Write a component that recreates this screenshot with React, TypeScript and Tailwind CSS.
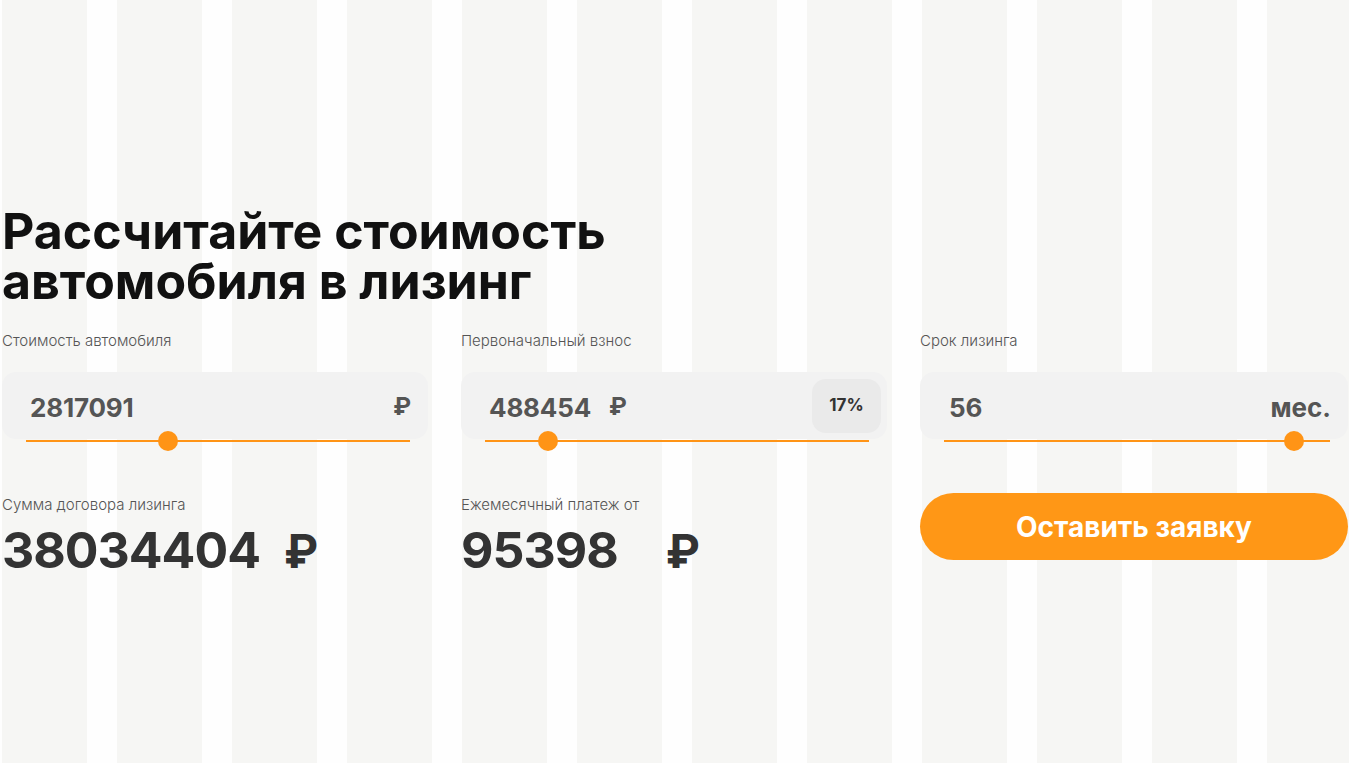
const stripes = Array.from({ length: 12 });

type SliderProps = { pos: number };

// thin orange track sitting on the bottom edge of the input box
function Slider({ pos }: SliderProps) {
  return (
    <div className="absolute left-[24px] right-[18px] bottom-[-3px] h-[2px] bg-[#ff9416]">
      <div
        className="absolute top-[-9px] w-[20px] h-[20px] rounded-full bg-[#ff9416]"
        style={{ left: `${pos}px` }}
      />
    </div>
  );
}

export default function App() {
  return (
    <div className="relative min-h-screen bg-[#fefefe] overflow-hidden font-['Inter',sans-serif] text-[#111]">
      {/* background grid */}
      <div className="absolute inset-0 flex gap-[30px] pl-[2px]">
        {stripes.map((_, i) => (
          <div key={i} className="w-[85px] shrink-0 h-full bg-[#f6f6f4]" />
        ))}
      </div>

      <div className="relative pl-[2px] pt-[206px] w-[1348px]">
        <h1 className="text-[50px] leading-[50px] font-bold tracking-[0px] text-[#111]">
          Рассчитайте стоимость
          <br />
          автомобиля в лизинг
        </h1>

        <div className="grid grid-cols-[426px_426px_428px] gap-x-[33px] mt-[25px]">
          {/* car price */}
          <div>
            <div className="text-[15px] leading-[20px] font-light text-[#555]">Стоимость автомобиля</div>
            <div className="relative mt-[21px] h-[67px] rounded-[14px] bg-[#f2f2f2] flex items-center justify-between pt-[3px] pl-[28px] pr-[17px]">
              <span className="text-[26px] font-bold text-[#555] tracking-[-0.2px]">2817091</span>
              <span className="text-[24px] font-bold text-[#555]">₽</span>
              <Slider pos={132} />
            </div>
          </div>

          {/* initial payment */}
          <div>
            <div className="text-[15px] leading-[20px] font-light text-[#555]">Первоначальный взнос</div>
            <div className="relative mt-[21px] h-[67px] rounded-[14px] bg-[#f2f2f2] flex items-center pl-[28px] pr-[6px]">
              <span className="pt-[3px] text-[26px] font-bold text-[#555] tracking-[-0.2px]">488454</span>
              <span className="pt-[3px] ml-[18px] text-[24px] font-bold text-[#555]">₽</span>
              <div className="ml-auto w-[69px] h-[54px] rounded-[14px] bg-[#eaeaea] flex items-center justify-center text-[17px] font-bold text-[#333]">
                17%
              </div>
              <Slider pos={53} />
            </div>
          </div>

          {/* term */}
          <div>
            <div className="text-[15px] leading-[20px] font-light text-[#555]">Срок лизинга</div>
            <div className="relative mt-[21px] h-[67px] rounded-[14px] bg-[#f2f2f2] flex items-center justify-between pt-[3px] pl-[29px] pr-[17px]">
              <span className="text-[26px] font-bold text-[#555]">56</span>
              <span className="text-[26px] font-bold text-[#555]">мес.</span>
              <Slider pos={340} />
            </div>
          </div>
        </div>

        <div className="grid grid-cols-[426px_426px_428px] gap-x-[33px] mt-[56px]">
          <div>
            <div className="text-[15px] leading-[20px] font-light text-[#555]">Сумма договора лизинга</div>
            <div className="mt-[10px] flex items-baseline text-[50px] leading-none font-bold text-[#333]">
              <span className="tracking-[-1px]">38034404</span>
              <span className="ml-[24px] text-[46px]">₽</span>
            </div>
          </div>
          <div>
            <div className="text-[15px] leading-[20px] font-light text-[#555]">Ежемесячный платеж от</div>
            <div className="mt-[10px] flex items-baseline text-[50px] leading-none font-bold text-[#333]">
              <span className="tracking-[-1px]">95398</span>
              <span className="ml-[48px] text-[46px]">₽</span>
            </div>
          </div>
          <div className="-mt-[2px]">
            <button className="w-full h-[67px] rounded-full bg-[#ff9716] text-white text-[28px] font-bold tracking-[0px]">
              Оставить заявку
            </button>
          </div>
        </div>
      </div>
    </div>
  );
}
